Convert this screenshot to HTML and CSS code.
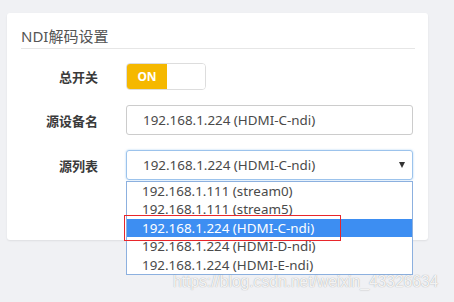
FILE: index.html
```html
<!DOCTYPE html>
<html lang="zh-CN">
  <head>
    <meta charset="UTF-8" />
    <meta name="viewport" content="width=device-width, initial-scale=1.0" />
    <title>NDI解码设置</title>
    <link rel="stylesheet" href="styles.css">
  </head>
  <body>
    <div class="panel">
      <h2 class="panel-title">NDI解码设置</h2>
      <div class="row">
        <label class="row-label">总开关</label>
        <div class="switch">
          <span class="switch-on">ON</span>
          <span class="switch-off"></span>
        </div>
      </div>
      <div class="row">
        <label class="row-label">源设备名</label>
        <div class="field">192.168.1.224 (HDMI-C-ndi)</div>
      </div>
      <div class="row">
        <label class="row-label">源列表</label>
        <div class="select-wrap">
          <div class="field select-box">
            <span>192.168.1.224 (HDMI-C-ndi)</span>
            <span class="caret"></span>
          </div>
          <ul class="options">
            <li>192.168.1.111 (stream0)</li>
            <li>192.168.1.111 (stream5)</li>
            <li class="selected">192.168.1.224 (HDMI-C-ndi)</li>
            <li>192.168.1.224 (HDMI-D-ndi)</li>
            <li>192.168.1.224 (HDMI-E-ndi)</li>
          </ul>
          <div class="mark"></div>
        </div>
      </div>
    </div>
    <div class="watermark">https://blog.csdn.net/weixin_43326634</div>
  </body>
</html>
```

FILE: styles.css
```css
body {
  margin: 0;
  padding: 13px 0 0 7px;
  background-color: #f0f1f4;
  font-family: "Noto Sans", "Noto Sans CJK SC", sans-serif;
  color: #333;
  height: 302px;
  box-sizing: border-box;
  position: relative;
  overflow: hidden;
}

.panel {
  width: 421px;
  height: 227px;
  box-sizing: border-box;
  background: #fff;
  border-radius: 3px;
  box-shadow: 0 1px 2px rgba(0, 0, 0, 0.08);
  padding: 14px 13px 0 14px;
}

.panel-title {
  margin: 0;
  font-size: 15px;
  font-weight: normal;
  color: #555;
  line-height: 19px;
  padding-bottom: 2px;
  border-bottom: 1px solid #e6e6e6;
}

.row {
  display: flex;
  align-items: center;
  margin-top: 14px;
}

.row + .row {
  margin-top: 15px;
}

.row-label {
  width: 77px;
  text-align: right;
  font-size: 13px;
  font-weight: bold;
  color: #3a3a3a;
  margin-right: 28px;
}

.switch {
  display: flex;
  width: 80px;
  height: 27px;
  box-sizing: border-box;
  border: 1px solid #ddd;
  border-radius: 4px;
  overflow: hidden;
}

.switch-on {
  width: 40px;
  background: #f5b800;
  color: #fff;
  font-size: 12px;
  font-weight: bold;
  display: flex;
  align-items: center;
  justify-content: center;
}

.switch-off {
  flex: 1;
  background: #fff;
}

.field {
  width: 287px;
  height: 30px;
  box-sizing: border-box;
  border: 1px solid #ccc;
  border-radius: 3px;
  padding: 0 16px;
  font-size: 13.4px;
  color: #4a4a4a;
  display: flex;
  align-items: center;
}

.select-wrap {
  position: relative;
}

.select-box {
  justify-content: space-between;
  border-color: #9cc3ec;
  box-shadow: 0 0 2px rgba(102, 175, 233, 0.6);
  padding-right: 7px;
}

.caret {
  width: 0;
  height: 0;
  border-left: 3.5px solid transparent;
  border-right: 3.5px solid transparent;
  border-top: 6px solid #333;
}

.options {
  position: absolute;
  left: 0;
  top: 31px;
  width: 287px;
  box-sizing: border-box;
  margin: 0;
  padding: 0;
  list-style: none;
  background: #fff;
  border: 1px solid #8cb0df;
}

.options li {
  height: 18.4px;
  line-height: 18.4px;
  padding-left: 15px;
  font-size: 13.4px;
  color: #4a4a4a;
}

.options li.selected {
  background: #3d8ef2;
  color: #fff;
}

.mark {
  position: absolute;
  left: -2px;
  top: 65px;
  width: 217px;
  height: 26px;
  box-sizing: border-box;
  border: 1px solid #e8262b;
}

.watermark {
  position: absolute;
  left: 173px;
  top: 273px;
  font-family: "Liberation Sans", Arial, sans-serif;
  font-size: 15.6px;
  color: rgba(255, 255, 255, 0.9);
  text-shadow: 0 0 1px rgba(110, 110, 110, 0.7);
}
```
